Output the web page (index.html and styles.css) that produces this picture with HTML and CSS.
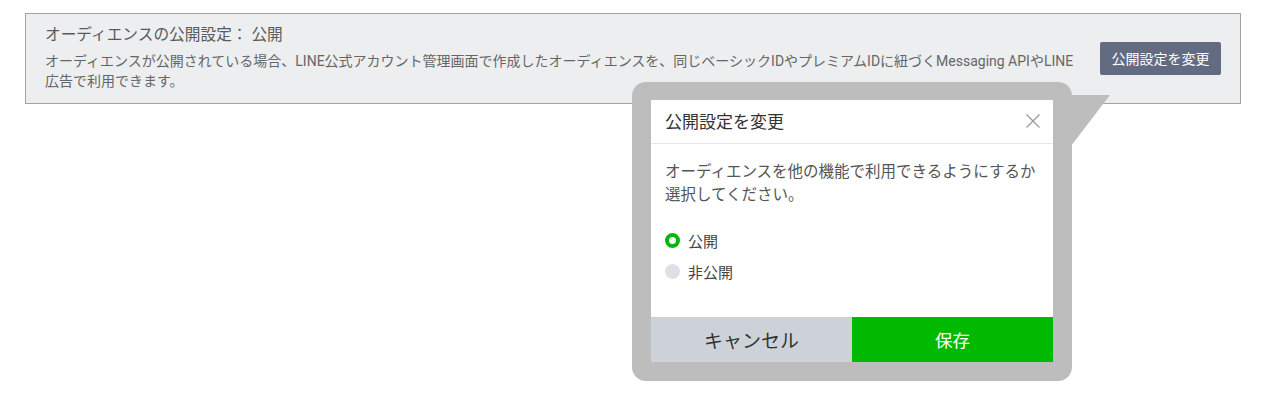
FILE: index.html
```html
<!DOCTYPE html>
<html lang="ja">
<head>
    <meta charset="utf-8">
    <title>公開設定</title>
    <link rel="stylesheet" href="styles.css">
</head>
<body>
    <div class="notice">
        <div class="notice-text">
            <div class="notice-title">オーディエンスの公開設定： 公開</div>
            <p class="notice-desc">オーディエンスが公開されている場合、LINE公式アカウント管理画面で作成したオーディエンスを、同じベーシックIDやプレミアムIDに紐づくMessaging APIやLINE広告で利用できます。</p>
        </div>
        <button class="btn-change">公開設定を変更</button>
    </div>

    <!-- popover anchored to the change button -->
    <div class="popover">
        <div class="popover-tail"></div>
        <div class="modal">
            <div class="modal-head">
                <span>公開設定を変更</span>
                <svg class="close" width="16" height="16" viewBox="0 0 16 16">
                    <path d="M1.5 1.5 L14.5 14.5 M14.5 1.5 L1.5 14.5" stroke="#9a9a9a" stroke-width="1.3" fill="none"/>
                </svg>
            </div>
            <div class="modal-body">
                <p>オーディエンスを他の機能で利用できるようにするか選択してください。</p>
                <label class="radio checked"><span class="dot"></span>公開</label>
                <label class="radio"><span class="dot"></span>非公開</label>
            </div>
            <div class="modal-foot">
                <button class="btn-cancel">キャンセル</button>
                <button class="btn-save">保存</button>
            </div>
        </div>
    </div>
</body>
</html>
```

FILE: styles.css
```css
body {
    margin: 0;
    padding: 13px 25px 0 25px;
    font-family: Roboto, "Noto Sans CJK JP", sans-serif;
    background: #fff;
}

.notice {
    display: flex;
    align-items: center;
    border: 1px solid #a3a3a3;
    background-color: #eceef0;
    padding: 11px 19px 12px 19px;
}

.notice-text {
    flex: 1;
    margin-right: 24px;
}

.notice-title {
    font-size: 15.7px;
    line-height: 20px;
    color: #5a5a5a;
    margin-bottom: 6px;
}

.notice-desc {
    margin: 0;
    font-size: 14px;
    line-height: 20px;
    color: #666;
}

.btn-change {
    width: 121px;
    height: 33px;
    border: none;
    border-radius: 2px;
    background-color: #636b82;
    color: #fff;
    font-family: inherit;
    font-size: 14px;
}

.popover {
    position: absolute;
    left: 632px;
    top: 82px;
    width: 402px;
    padding: 18px 19px 19px 19px;
    background-color: #bdbdbd;
    border-radius: 14px;
}

.popover-tail {
    position: absolute;
    left: 423px;
    top: 13px;
    width: 55px;
    height: 51px;
    background-color: #bdbdbd;
    clip-path: polygon(0 0, 100% 0, 16px 100%, 0 100%);
}

.modal {
    position: relative;
    background: #fff;
}

.modal-head {
    display: flex;
    justify-content: space-between;
    align-items: center;
    padding: 0 12px 2px 14px;
    box-sizing: border-box;
    height: 44px;
    border-bottom: 1px solid #e6e6e6;
    font-size: 17px;
    color: #333;
}

.modal-body {
    padding: 17px 14px 35px 14px;
    color: #555;
}

.modal-body p {
    margin: 0 0 22px 0;
    font-size: 15.5px;
    line-height: 23px;
}

.radio {
    display: flex;
    align-items: center;
    height: 22px;
    font-size: 15px;
    color: #444;
}

.radio + .radio {
    margin-top: 9px;
}

.dot {
    width: 15px;
    height: 15px;
    border-radius: 50%;
    background-color: #dde0e6;
    margin-right: 8px;
    box-sizing: border-box;
}

.radio.checked .dot {
    background-color: #fff;
    border: 4px solid #00b900;
}

.modal-foot {
    display: flex;
}

.modal-foot button {
    flex: 1;
    height: 45px;
    border: none;
    font-family: inherit;
}

.btn-cancel {
    background-color: #cdd2d9;
    color: #333;
    font-size: 19px;
}

.btn-save {
    background-color: #00b900;
    color: #fff;
    font-size: 17.5px;
}
```
